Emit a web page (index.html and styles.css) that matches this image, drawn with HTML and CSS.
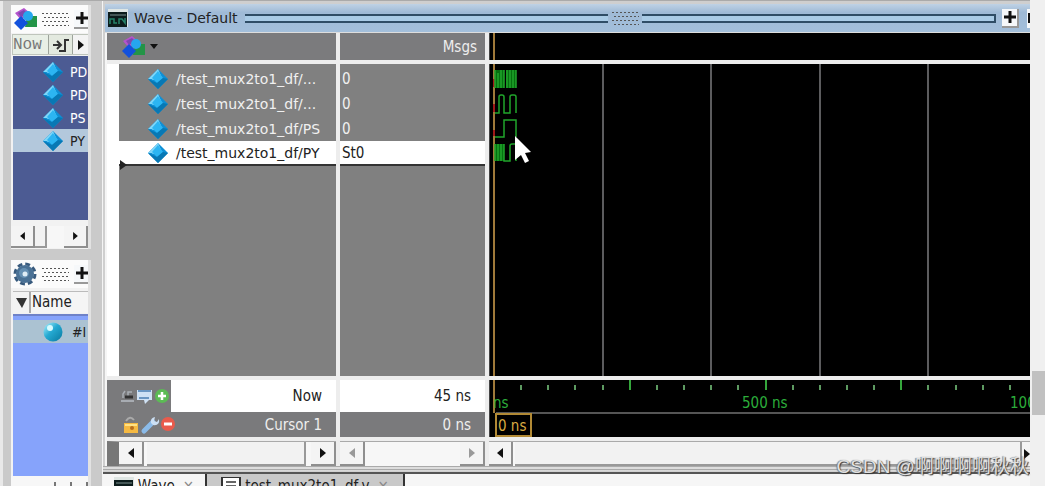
FILE: index.html
```html
<!DOCTYPE html>
<html lang="en">
<head>
<meta charset="utf-8">
<title>Wave - Default</title>
<link rel="stylesheet" href="styles.css">
</head>
<body>
<svg class="defs" aria-hidden="true">
  <defs>
    <linearGradient id="ball" x1="0" y1="0" x2="1" y2="1"><stop offset="0" stop-color="#b5f4ff"/><stop offset=".45" stop-color="#25a9d2"/><stop offset="1" stop-color="#08799f"/></linearGradient>
    <symbol id="gem" viewBox="0 0 20 20"><path d="M10 0 20 10 10 20 0 10Z" fill="#0d8fd6"/><path d="M10 0 4 10H0Z M10 0 14 9 5 11 2 9Z" fill="#7fd6f8"/><path d="M10 2 15 9 9 14 4 9Z" fill="#2cb5f2"/><path d="M20 10 10 20 0 10 9 14 15 9Z" fill="#0878b4"/></symbol>
    <symbol id="shapes" viewBox="0 0 24 24"><path d="M2 6 11 1 17 6 8 13Z" fill="#b453cc"/><path d="M5 6 11 3 14 6 8 10Z" fill="#7d48ae"/><path d="M14 9H24V20H12Z" fill="#239447"/><circle cx="15" cy="9" r="5" fill="#26a6ee"/><path d="M8 9 15 16 8 23 1 16Z" fill="#1251dc"/></symbol>
    <symbol id="plus" viewBox="0 0 12 12"><path d="M6 0V12M0 6H12" stroke="#111" stroke-width="3"/></symbol>
    <symbol id="left" viewBox="0 0 6 10"><path d="M6 0V10L0 5Z" fill="currentColor"/></symbol>
    <symbol id="right" viewBox="0 0 6 10"><path d="M0 0V10L6 5Z" fill="currentColor"/></symbol>
    <symbol id="wavelogo" viewBox="0 0 20 18"><path d="M0 0H20V18H0Z" fill="#dfe6e4"/><path d="M0 3H19V18H0Z" fill="#0c1c1c"/><path d="M2 6H18" stroke="#7d9190"/><path d="M2 15V10H6V14H9M11 15V10H14L17 14V9" fill="none" stroke="#26826a" stroke-width="1.5"/></symbol>
    <pattern id="dots" width="4" height="8" patternUnits="userSpaceOnUse"><path d="M0 0h2v1h-2zM2 4h2v1h-2z" fill="#555"/></pattern>
  </defs>
</svg>
<div class="app">
  <aside class="side">
    <section class="panel objects">
      <header class="panel-head">
        <svg class="ico24"><use href="#shapes"/></svg>
        <svg class="grip"><rect width="27" height="13" fill="url(#dots)"/></svg>
        <button class="square" aria-label="Expand objects"><svg class="plus"><use href="#plus"/></svg></button>
      </header>
      <div class="nowbar">
        <span class="now">Now</span>
        <button class="jump" aria-label="Jump"><svg width="18" height="16"><path d="M1 8H8M5 4 9 8 5 12M7 14H13V3H17" fill="none" stroke="#333" stroke-width="2"/></svg></button>
        <button class="more" aria-label="More"><svg class="arrow"><use href="#right"/></svg></button>
      </div>
      <ul class="tree">
        <li><svg class="gem"><use href="#gem"/></svg>PD</li>
        <li><svg class="gem"><use href="#gem"/></svg>PD</li>
        <li><svg class="gem"><use href="#gem"/></svg>PS</li>
        <li class="chosen"><svg class="gem"><use href="#gem"/></svg>PY</li>
      </ul>
      <div class="scroll small">
        <button aria-label="Scroll left"><svg class="arrow"><use href="#left"/></svg></button>
        <span class="thumb"></span><span class="track"></span>
        <button aria-label="Scroll right"><svg class="arrow"><use href="#right"/></svg></button>
      </div>
    </section>
    <section class="panel process">
      <header class="panel-head">
        <svg class="ico24" viewBox="0 0 24 24"><circle cx="12" cy="12" r="10" fill="none" stroke="#385a7d" stroke-width="3" stroke-dasharray="4.85 3"/><circle cx="12" cy="12" r="9" fill="#4a7195"/><circle cx="11" cy="11" r="5" fill="#6690b3"/><circle cx="12" cy="12" r="2.5" fill="#e0edf6"/></svg>
        <svg class="grip"><rect width="27" height="13" fill="url(#dots)"/></svg>
        <button class="square" aria-label="Expand processes"><svg class="plus"><use href="#plus"/></svg></button>
      </header>
      <div class="namebar"><button aria-label="Sort"><svg width="11" height="10"><path d="M0 0H11L6 10Z" fill="#333"/></svg></button><span>Name</span></div>
      <ul class="tree blue">
        <li class="chosen"><svg class="gem" viewBox="0 0 20 20"><circle cx="10" cy="10" r="9.5" fill="url(#ball)"/><circle cx="7" cy="6" r="3" fill="#d8fbff"/></svg>#I</li>
      </ul>
      <div class="stub"><i></i><i></i><i></i></div>
    </section>
  </aside>

  <main class="main">
    <header class="title">
      <svg class="logo"><use href="#wavelogo"/></svg>
      <h1>Wave - Default</h1>
      <span class="rails"></span>
      <svg class="grip"><rect width="27" height="13" fill="url(#dots)"/></svg>
      <span class="rails end"></span>
      <button class="square" aria-label="Zoom pane"><svg class="plus"><use href="#plus"/></svg></button>
      <button class="square cut" aria-label="Undock"><svg width="12" height="12"><path d="M2 11V2H11" fill="none" stroke="#111" stroke-width="2"/></svg></button>
    </header>
    <div class="wave">
      <div class="cell tools"><svg class="ico24"><use href="#shapes"/></svg><svg width="8" height="6"><path d="M0 0H8L4 5Z" fill="#111"/></svg></div>
      <div class="cell msgs">Msgs</div>
      <div class="plot"><svg class="canvas"><path d="M4 0V28" stroke="#a07a3a" stroke-width="2"/></svg></div>

      <div class="names">
        <ul class="rows">
          <li><svg class="gem"><use href="#gem"/></svg>/test_mux2to1_df/...</li>
          <li><svg class="gem"><use href="#gem"/></svg>/test_mux2to1_df/...</li>
          <li><svg class="gem"><use href="#gem"/></svg>/test_mux2to1_df/PS</li>
          <li class="picked"><svg class="gem"><use href="#gem"/></svg>/test_mux2to1_df/PY</li>
        </ul>
        <svg class="marker" width="7" height="12"><path d="M0 1 7 6 0 11Z" fill="#222"/></svg>
      </div>
      <div class="values">
        <ul class="rows"><li>0</li><li>0</li><li>0</li><li class="picked">St0</li></ul>
      </div>
      <div class="plot">
        <svg class="canvas">
          <g stroke="#5c5c5e" stroke-width="2"><path d="M113 0V1000M221 0V1000M330 0V1000M438 0V1000"/></g>
          <path d="M4 0V1000" stroke="#a07a3a" stroke-width="2"/>
          <path d="M4 15V23M4 40V48M4 66V72" stroke="#a01818" stroke-width="2"/>
          <path d="M5 6H14V24H5ZM16 6H26V24H16ZM5 80H14V97H5Z" fill="#067010"/>
          <g fill="none" stroke="#20a52b" stroke-width="1.5">
            <path d="M5 24V6M8 9V24M11 24V6M14 6V24M17 24V6M20 6V24M23 24V6M26 6V24"/>
            <path d="M5 49H9V33Q9 31 11 31H12Q14 31 14 33V49H20V33Q20 31 22 31H24Q26 31 26 33V49"/>
            <path d="M5 73H14V56H26V73"/>
            <path d="M5 97V80M8 80V97M11 97V80M14 80V97H20V82Q20 80 22 80H26V97"/>
          </g>
          <path d="M25 72V96L31 91 35 99 39 97 35 89 41 88Z" fill="#fff"/>
        </svg>
      </div>

      <div class="foot">
        <div class="foot-row"><span class="icons">
          <svg width="50" height="20" aria-hidden="true"><path d="M1 15H14" stroke="#b9bec4" stroke-width="1.5"/><path d="M3 12V8L5 5M8 12V6H12" fill="none" stroke="#a9aeb4" stroke-width="1.5"/><path d="M5 11H13" stroke="#333" stroke-width="3"/><path d="M17 4H32V14H29L25 18 24 14H17Z" fill="#cfe1f4"/><path d="M18 5H31M19 12H29" stroke="#6b96c2" stroke-width="2"/><circle cx="42" cy="10" r="7" fill="#5cbb55"/><path d="M42 6V14M38 10H46" stroke="#fff" stroke-width="2.5"/></svg>
        </span><span class="label bright">Now</span></div>
        <div class="foot-row"><span class="icons">
          <svg width="58" height="20" aria-hidden="true"><path d="M6 6Q10 0 14 5" fill="none" stroke="#aaa" stroke-width="2"/><path d="M4 8H18V18H4Z" fill="#f5b942"/><path d="M5 10H17" stroke="#ffe184" stroke-width="2"/><circle cx="12" cy="13" r="2" fill="#b96e1c"/><path d="M24 16 33 7" stroke="#8bbbe9" stroke-width="5" stroke-linecap="round"/><path d="M31 8Q30 3 35 2L34 6 37 7 39 4Q40 11 33 10Z" fill="#cce0f4"/><circle cx="48" cy="9" r="7" fill="#e95b4c"/><path d="M44 9H52" stroke="#fff" stroke-width="3"/></svg>
        </span><span class="label">Cursor 1</span></div>
      </div>
      <div class="foot">
        <div class="foot-row"><span class="label bright">45 ns</span></div>
        <div class="foot-row"><span class="label">0 ns</span></div>
      </div>
      <div class="plot scale">
        <svg class="canvas">
          <path d="M4 0V33" stroke="#a07a3a" stroke-width="2"/>
          <path d="M31 5V10M58 5V10M85 5V10M113 5V10M167 5V10M194 5V10M221 5V10M248 5V10M303 5V10M330 5V10M357 5V10M384 5V10M438 5V10M466 5V10M493 5V10M520 5V10" stroke="#5d9a61" stroke-width="2"/>
          <path d="M140 0V10M276 0V10M411 0V10" stroke="#35a63c" stroke-width="2"/>
          <path d="M6 33H1600" stroke="#555" stroke-width="2"/>
          <g class="times"><text x="3" y="28">ns</text><text x="252" y="28">500 ns</text><text x="520" y="28">1000 ns</text></g>
          <rect x="6" y="34" width="35" height="22" fill="#000" stroke="#b28a35" stroke-width="2"/>
          <text class="cursor-time" x="8" y="51">0 ns</text>
        </svg>
      </div>

      <div class="scroll inset">
        <button aria-label="Names left"><svg class="arrow"><use href="#left"/></svg></button><span class="thumb"></span><button aria-label="Names right"><svg class="arrow"><use href="#right"/></svg></button>
      </div>
      <div class="scroll idle">
        <button aria-label="Values left"><svg class="arrow"><use href="#left"/></svg></button><span class="track"></span><button aria-label="Values right"><svg class="arrow"><use href="#right"/></svg></button>
      </div>
      <div class="scroll last">
        <button aria-label="Wave left"><svg class="arrow"><use href="#left"/></svg></button><span class="thumb"></span><button class="half" aria-label="Wave right"><svg class="arrow"><use href="#right"/></svg></button>
      </div>
    </div>
    <div class="edge"></div>
    <nav class="tabs">
      <button class="tab"><svg class="logo"><use href="#wavelogo"/></svg>Wave<span class="close">×</span></button>
      <button class="tab back"><svg width="20" height="18"><path d="M1 0H19V18H1Z" fill="#fff" stroke="#333" stroke-width="2"/><path d="M5 5H15M5 9H15M5 13H12" stroke="#666" stroke-width="2"/></svg>test_mux2to1_df.v<span class="close">×</span></button>
    </nav>
    <div class="watermark">CSDN @啊啊啊啊秋秋</div>
  </main>
</div>
<div class="page-scroll"><span></span></div>
</body>
</html>
```
FILE: styles.css
```css
* { box-sizing: border-box; }
body {
  margin: 0;
  height: 100vh;
  display: flex;
  overflow: hidden;
  font: 15px/20px "DejaVu Sans Condensed", "DejaVu Sans", sans-serif;
  color: #222;
}
ul { list-style: none; margin: 0; padding: 0; }
button { font: inherit; color: inherit; border: 0; padding: 0; margin: 0; background: #f3f3f3; display: flex; align-items: center; justify-content: center; flex: none; }
svg { flex: none; display: block; }
.defs { position: absolute; width: 0; height: 0; }
.app { flex: 1; min-width: 0; display: flex; background: #cfcfcf; border-top: 1px solid #aaa; }
.ico24 { width: 24px; height: 24px; }
.gem { width: 20px; height: 20px; }
.plus { width: 12px; height: 12px; }
.grip { width: 27px; height: 13px; }
.arrow { width: 6px; height: 10px; }
.logo { width: 20px; height: 18px; }

.side { width: 103px; flex: none; display: flex; flex-direction: column; gap: 11px; padding: 4px 11px 0 8px; border-left: 3px solid #e9e9e9; border-right: 1px solid #f4f4f4; background: #cacaca; }
.panel { background: #f2f2f2; display: flex; flex-direction: column; overflow: hidden; border-right: 3px solid #e2e2e2; }
.objects { height: 244px; flex: none; }
.process { flex: 1; }
.panel-head { height: 28px; flex: none; display: flex; align-items: center; gap: 5px; padding-left: 2px; background: #fbfbfb; }
.square { width: 17px; height: 19px; background: #f6f8fa; border-right: 2px solid #999; border-bottom: 2px solid #999; }
.nowbar { height: 21px; margin: 1px 0 1px 1px; display: flex; flex: none; border: 1px solid #bfc5bc; border-right: 0; background: #e8efe6; }
.now { width: 35px; font: 16px/20px "Liberation Mono", monospace; color: #777; }
.jump { width: 25px; background: #e3e9df; border: solid #9da39b; border-width: 0 1px; }
.more { flex: 1; color: #111; }
.tree { margin-left: 2px; height: 164px; background: #4c5b93; color: #fff; overflow: hidden; padding-top: 4px; font-size: 14px; }
.tree li { display: flex; align-items: center; gap: 7px; height: 23px; padding-left: 30px; white-space: nowrap; }
.tree .chosen { background: #b3c8dc; color: #222; }
.blue { flex: 1; height: auto; background: #86a3fb; border-top: 2px solid #6f82c8; }
.tree.blue .chosen { background: #abc2d2; gap: 9px; }
.namebar { height: 22px; margin: 3px 0 1px 2px; display: flex; flex: none; border-top: 1px solid #bbb; background: #f5f5f5; }
.namebar button { width: 18px; border-right: 2px solid #aaa; margin-right: 1px; }
.stub { height: 10px; flex: none; display: flex; gap: 14px; align-items: flex-end; justify-content: flex-end; background: #f7f7f7; }
.stub i { width: 2px; height: 4px; background: #777; }

.scroll { display: flex; background: #f7f7f7; color: #111; border-top: 1px solid #aaa; }
.scroll button { width: 25px; background: #f4f4f4; border: solid #8f8f8f; border-width: 0 2px 2px 0; }
.scroll .thumb { flex: 1; background: #f2f2f2; border: solid #999; border-width: 0 2px 2px 0; }
.scroll .track { flex: 1; }
.small { height: 22px; margin-top: 6px; flex: none; border-top: 0; }
.small .thumb { flex: none; width: 12px; }
.small button { width: 24px; }
.small .arrow { width: 5px; height: 8px; }
.inset { border-left: 12px solid #777; }
.inset .thumb { margin: 0 5px 0 3px; }
.scroll.idle { color: #999; }
.last button { width: 24px; }
.last .thumb { margin-left: 2px; }
.scroll .half { width: 8px; border: 0; justify-content: flex-end; overflow: hidden; }

.main { position: relative; flex: 1; min-width: 0; display: flex; flex-direction: column; padding-top: 3px; }
.title { height: 29px; margin-left: 2px; flex: none; display: flex; align-items: center; padding-left: 3px; background: linear-gradient(#bfd2e5, #9fbad6 30%, #a3bfdb); border-bottom: 1px solid #ddd; overflow: hidden; }
.title h1 { margin: 0 7px 0 6px; font: 14px/20px "DejaVu Sans", sans-serif; white-space: nowrap; }
.rails { flex: 361 1 0; height: 9px; border: solid #2f4d66; border-width: 2px 0; background: #a9cbe6; margin-right: 4px; }
.title .grip { margin-right: 3px; }
.rails.end { flex-grow: 350; border-right-width: 2px; margin-right: 6px; }
.title .cut { width: 3px; margin-left: 8px; border: 0; overflow: hidden; justify-content: flex-start; }

.wave { flex: 1; min-height: 0; display: grid; grid-template-columns: 229px 145px minmax(0, 1fr); grid-template-rows: 27px minmax(0, 1fr) 57px 25px; gap: 4px; margin-left: 2px; border-left: 2px solid #f5f5f5; background: #ededed; }
.cell { background: #7b7b7d; color: #eee; display: flex; align-items: center; }
.tools { padding-left: 14px; gap: 5px; }
.msgs { justify-content: flex-end; padding-right: 8px; }
.plot { background: #000; overflow: hidden; border-left: 1px solid #444; }
.canvas { width: 100%; height: 100%; }
.names, .values { position: relative; background: #808080; color: #f0f0f0; padding-top: 2px; overflow: hidden; }
.names { border-left: 12px solid #fff; font: 14px/20px "DejaVu Sans", sans-serif; }
.rows li { height: 25px; display: flex; align-items: center; gap: 8px; padding-left: 2px; white-space: nowrap; }
.names .rows li { padding-left: 29px; }
.rows .picked { background: #fff; color: #222; border-bottom: 2px solid #333; }
.marker { position: absolute; left: 1px; top: 95px; }
.foot { background: #7a7a7c; color: #eee; display: flex; flex-direction: column; }
.foot-row { height: 25px; display: flex; align-items: stretch; }
.foot-row:first-child { height: 32px; }
.icons { width: 64px; flex: none; display: flex; align-items: center; padding-left: 13px; }
.label { flex: 1; display: flex; align-items: center; justify-content: flex-end; padding-right: 14px; }
.bright { background: #fff; color: #222; }
.times { font-size: 15px; fill: #2cad3b; }
.cursor-time { font-size: 15px; fill: #d9aa42; }
.edge { height: 8px; flex: none; background: linear-gradient(#aaa 1px, #ddd 1px, #ddd 3px, #aaa 3px, #aaa 4px, #ddd 4px, #ccc 6px, #555 6px); }
.tabs { height: 12px; flex: none; display: flex; align-items: flex-start; overflow: hidden; background: #f6f6f6; }
.tab { height: 24px; width: 102px; gap: 4px; background: #f6f6f6; }
.tab.back { width: 200px; background: #c9c9c9; border: solid #333; border-width: 0 2px; }
.close { color: #888; }
.tab .close { margin-left: 4px; }
.watermark { position: absolute; right: 1px; bottom: 7px; font: 19px/24px "Liberation Sans", "Noto Sans CJK SC", sans-serif; color: #e0e0e0; text-shadow: 1px 1px 1px #333, -1px 0 1px #777; white-space: nowrap; }
.page-scroll { width: 15px; flex: none; background: #f0f0f0; padding: 371px 0 0 2px; }
.page-scroll span { display: block; height: 44px; background: #c1c1c1; }
```
